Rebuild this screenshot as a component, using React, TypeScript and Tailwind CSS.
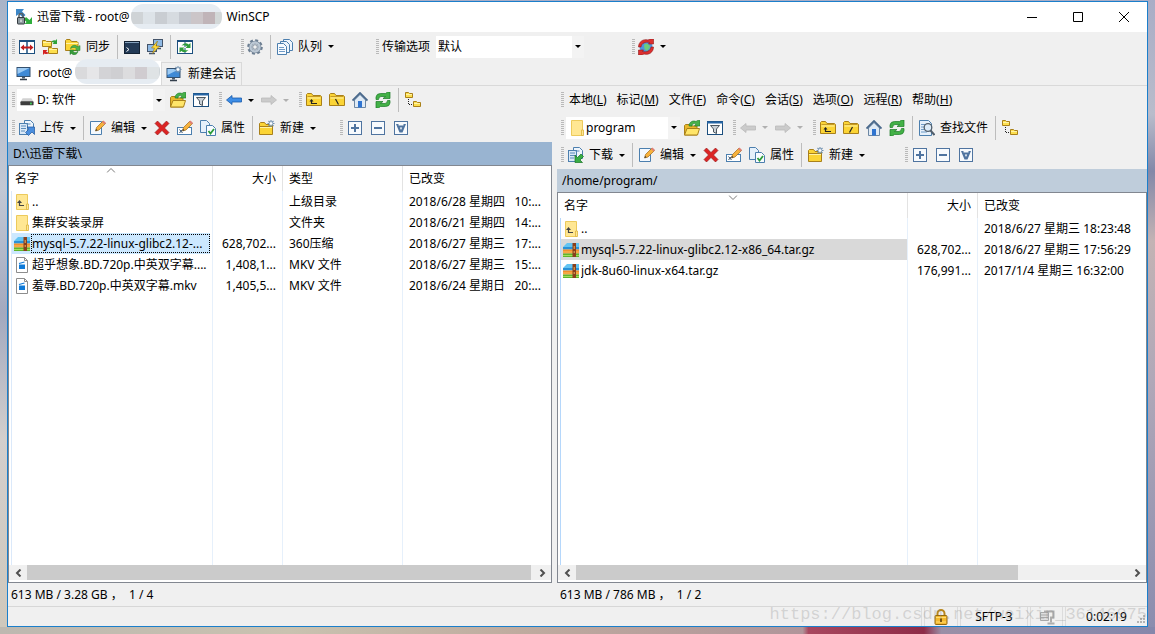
import React from 'react';

const Svg: React.FC<{ children: React.ReactNode; size?: number }> = ({ children, size = 16 }) => (
  <svg viewBox="0 0 16 16" width={size} height={size} className="shrink-0" aria-hidden="true">
    {children}
  </svg>
);

const AppIcon = () => (
  <Svg>
    <path d="M0 0h8L6 2.500 9.500 6 7 8.500 3 5 0 7z" fill="#3d86c6" />
    <path d="M16 15H8.500l2-2L8 10.500l2-2.500 3.500 3L16 8z" fill="#2fae3c" />
    <path d="M3 9V6.500a2 2 0 0 1 4 0V9" fill="none" stroke="#555f66" strokeWidth="1.500" />
    <rect x="1.500" y="8.500" width="7" height="6.500" rx="0.500" fill="#8e999f" stroke="#343b40" />
    <path d="M5 10.500v2.500" stroke="#fff" />
  </Svg>
);

const SplitIcon = () => (
  <Svg>
    <rect x="0.500" y="1.500" width="15" height="13" fill="#fff" stroke="#1c4f7e" />
    <path d="M0 2h16" stroke="#1c4f7e" strokeWidth="2" />
    <path d="M8 1v14" stroke="#1c4f7e" strokeWidth="1.500" />
    <path d="M1.500 8.500L5 5.500v2h6v-2l3.500 3-3.500 3v-2H5v2z" fill="#c01c1c" />
  </Svg>
);

const FolderShape = () => (
  <>
    <path d="M0.500 13.500v-11l1-1h4l1.500 2h7.500l1 1v9z" fill="#fbd435" stroke="#a9801a" />
    <path d="M1.500 6h13" stroke="#fff3a6" />
    <path d="M1.500 4.500h13" stroke="#c79b22" />
  </>
);

const SmallFolder: React.FC<{ x: number; y: number; w?: number; h?: number }> = ({ x, y, w = 7, h = 5 }) => (
  <g transform={`translate(${x} ${y})`}>
    <path d={`M0.500 ${h + 0.5}V0.500h3l1 1H${w + 0.5}v${h - 1}z`} fill="#fddf4e" stroke="#a9801a" />
    <path d={`M1 2.500h${w - 1}`} stroke="#fff3a6" />
  </g>
);

const CompareIcon = () => (
  <Svg>
    <SmallFolder x={0} y={1} w={9} h={6} />
    <SmallFolder x={6} y={8} w={9} h={6} />
    <path d="M9 3q2-2.500 4.500-1.500L15 0v5h-4.500l1.500-1.500Q11 3 9 3z" fill="#2fa13a" />
    <path d="M7 13.500q-2 2.500-4.500 1L1 16v-5h4.500L4 12.500q1 1 3 1z" fill="#d32222" />
  </Svg>
);

const SyncIcon = () => (
  <Svg>
    <path d="M0.500 11.500v-10l1-1h3.500l1.500 2h5.500l1 1v8z" fill="#fbd435" stroke="#a9801a" />
    <path d="M1 4.500h12" stroke="#fff3a6" />
    <path d="M5.500 9.500c1-4 5.500-4 7.500-1.500l2-1.500v5h-5l1.500-1.500C10.500 8 8 8 5.500 9.500z" fill="#4db24a" stroke="#1d7a2a" strokeWidth="0.500" />
    <path d="M5 15.500v-4.500h4.500l-1.500 1.500c1.500 1.300 3.500 1.200 5-0.300-0.500 3.500-4.500 4.500-6.500 2.200z" fill="#3a9d3c" stroke="#1d7a2a" strokeWidth="0.500" />
  </Svg>
);

const ConsoleIcon = () => (
  <Svg>
    <rect x="0.500" y="2.500" width="15" height="12" fill="#233a56" stroke="#142233" />
    <path d="M1 3.500h14" stroke="#86a3bf" />
    <path d="M2.500 8.500l2.500 2-2.500 2" fill="none" stroke="#fff" />
  </Svg>
);

const PuttyIcon = () => (
  <Svg>
    <rect x="6.500" y="0.500" width="9" height="7" fill="#8fb9e4" stroke="#44546a" />
    <path d="M9 9.500h5" stroke="#44546a" strokeWidth="1.500" />
    <rect x="0.500" y="5.500" width="9" height="7" fill="#8fb9e4" stroke="#44546a" />
    <path d="M2 14.500h6" stroke="#44546a" strokeWidth="1.500" />
    <path d="M10.500 2L4.500 9h3l-2 5.500 7-7.500H9z" fill="#ffd93b" stroke="#9a7a10" strokeWidth="0.600" />
  </Svg>
);

const RefreshIcon = () => (
  <Svg>
    <path d="M1 7.500V5q0.500-3.500 4.500-3.500h5L12.500 0H15v6.500H8L10.500 4.500H6Q4 4.500 3.500 7.500z" fill="#43b147" stroke="#1b7a26" strokeWidth="0.700" />
    <path d="M15 8.500v2.500q-0.500 3.500-4.500 3.500h-5L3.500 16H1V9.500h7l-2.500 2H10q2 0 2.500-3z" fill="#43b147" stroke="#1b7a26" strokeWidth="0.700" />
  </Svg>
);

const KeepSyncIcon = () => (
  <Svg>
    <rect x="0.500" y="1.500" width="15" height="13" fill="#fff" stroke="#1c4f7e" />
    <path d="M0 2h16" stroke="#1c4f7e" strokeWidth="2" />
    <path d="M8 3v12" stroke="#1c4f7e" strokeDasharray="2 1" />
    <path d="M4.500 6.500Q8.500 2.500 11.500 5.500L13.500 4v5H8.500L10 7.500Q8 5.500 4.500 6.500z" fill="#2f9d3b" />
    <path d="M11.500 11Q7.500 15 4.500 12L2.500 13.500v-5h5L6 10q2 2 5.500 1z" fill="#2f9d3b" />
  </Svg>
);

const GearIcon = () => (
  <Svg>
    <circle cx="8" cy="8" r="6.600" fill="none" stroke="#6d7f92" strokeWidth="2.400" strokeDasharray="2.900 2.280" />
    <circle cx="8" cy="8" r="4.600" fill="none" stroke="#6d7f92" strokeWidth="3.400" />
    <circle cx="8" cy="8" r="4.500" fill="none" stroke="#bcc8d4" strokeWidth="2.400" />
    <circle cx="8" cy="8" r="2.300" fill="#f1f1f1" stroke="#6d7f92" strokeWidth="0.800" />
  </Svg>
);

const QueueIcon = () => (
  <Svg>
    <path d="M6.500 0.500h6l3 3v8h-9z" fill="#eef5fc" stroke="#4c7fae" />
    <path d="M3.500 2.500h6l3 3v8h-9z" fill="#eef5fc" stroke="#4c7fae" />
    <path d="M0.500 4.500h6l3 3v8h-9z" fill="#f8fbff" stroke="#4c7fae" />
    <path d="M2 8.500h5M2 10.500h6M2 12.500h6" stroke="#6f9bc6" />
  </Svg>
);

const ReconnectIcon = () => (
  <Svg>
    <circle cx="8" cy="8" r="6.500" fill="#4f93dc" />
    <path d="M6 5.500l2.500-1 3 1.500 0.500 2.500-3 3.500-2.500-2z" fill="#6dcb7c" />
    <path d="M0.500 8C0.500 3 5-0.500 10 1L12 0h3.500v5H10.500l1-1.500C7.500 2.500 3.500 4 3 8z" fill="#dd2f2f" stroke="#8d1717" strokeWidth="0.600" />
    <path d="M15.500 8c0 5-4.500 8.500-9.500 7L4 16H0.500v-5h5l-1 1.500c4 1 8-0.500 8.500-4.500z" fill="#dd2f2f" stroke="#8d1717" strokeWidth="0.600" />
  </Svg>
);

const Spark = () => (
  <>
    <path d="M12 0v7M8.500 3.500h7M9.500 1l5 5M14.500 1l-5 5" stroke="#7090b0" strokeWidth="1.100" />
    <circle cx="12" cy="3.500" r="1.800" fill="#fff" stroke="#7090b0" strokeWidth="0.600" />
  </>
);

const MonitorIcon: React.FC<{ spark?: boolean }> = ({ spark }) => (
  <Svg>
    <rect x="1" y="2.500" width="13" height="9" fill="#3f8ad6" stroke="#34506e" />
    <path d="M1.500 3h12L1.500 9z" fill="#9ccaf3" />
    <path d="M6 12h3v1.500H6z" fill="#4b5b6c" />
    <path d="M4 14.500h7" stroke="#333f4c" strokeWidth="1.500" />
    {spark && <Spark />}
  </Svg>
);

const DriveIcon = () => (
  <Svg size={14}>
    <path d="M3 6h10l2.500 4h-15z" fill="#d2d2d2" />
    <rect x="0.500" y="9.500" width="15" height="4.500" rx="1" fill="#3d3d3d" />
    <rect x="11.500" y="11" width="2" height="2" fill="#41d65a" />
  </Svg>
);

const OpenFolderIcon = () => (
  <Svg>
    <path d="M0.500 15V5.500l1-1h4l1 1.500H13V15z" fill="#e9b92b" stroke="#a9801a" />
    <path d="M0.500 15L3 8.500h12.500L13.500 15z" fill="#ffe569" stroke="#a9801a" />
    <path d="M5 6C5 2 9 0 12 1.500L13.500 0.500H16V6h-5.500l1.500-2C9.500 3 8 4 8 6z" fill="#46b04a" stroke="#1b7a26" strokeWidth="0.600" />
  </Svg>
);

const FilterIcon = () => (
  <Svg>
    <rect x="0.500" y="1.500" width="15" height="13" fill="#fff" stroke="#1c4f7e" />
    <path d="M0 2.500h16" stroke="#2565a5" strokeWidth="2" />
    <path d="M3.500 5.500h9L9.500 9v4.500L6.500 12V9z" fill="#c9d0d6" stroke="#4c565f" />
  </Svg>
);

const ArrowIcon: React.FC<{ dir: 'left' | 'right'; off?: boolean }> = ({ dir, off }) => (
  <Svg>
    <path
      d={dir === 'left' ? 'M0.500 8L6 3.500V6h9.500v4H6v2.500z' : 'M15.500 8L10 3.500V6H0.500v4H10v2.500z'}
      fill={off ? '#cbcbcb' : '#3d8de6'}
      stroke={off ? '#bababa' : '#1a5cab'}
      strokeWidth="0.800"
    />
  </Svg>
);

const ParentIcon = () => (
  <Svg>
    <FolderShape />
    <path d="M5.500 8v3.500h5.500" fill="none" stroke="#222" strokeWidth="1.200" />
    <path d="M3.500 9.500L5.500 7l2 2.500z" fill="#222" />
  </Svg>
);

const RootIcon: React.FC<{ slash: 'back' | 'forward' }> = ({ slash }) => (
  <Svg>
    <FolderShape />
    <path d={slash === 'back' ? 'M6.500 7l3 5.500' : 'M9.500 7l-3 5.500'} stroke="#222" strokeWidth="1.200" />
  </Svg>
);

const HomeIcon = () => (
  <Svg>
    <path d="M2.500 8v7.500h11V8L8 2.500z" fill="#dfeaf5" stroke="#6d87a3" />
    <path d="M0.500 8.500L8 1l7.500 7.500" fill="none" stroke="#4a698c" strokeWidth="1.800" />
    <rect x="6" y="9" width="4" height="6.500" fill="#2f74d0" />
  </Svg>
);

const TreeIcon = () => (
  <Svg>
    <SmallFolder x={0} y={0} w={7} h={5} />
    <SmallFolder x={8} y={9} w={7} h={5} />
    <path d="M3.500 7v6M4 12.500h4" stroke="#222" strokeDasharray="1 1" />
  </Svg>
);

const TransferIcon: React.FC<{ dir: 'up' | 'down' }> = ({ dir }) => (
  <Svg>
    <path d="M5.500 0.500h6l3 3v8h-9z" fill="#eef5fc" stroke="#4c7fae" />
    <rect x="0.500" y="3.500" width="8" height="11" fill="#dbe9f7" stroke="#4c7fae" />
    <path d="M2 6h5M2 8.500h5M2 11h4M7.500 4h4" stroke="#5b8cba" />
    {dir === 'up' ? (
      <path d="M8 7h7.500v7.500L13 12l-3.500 3.500-3-3L10 9z" fill="#4a8ede" stroke="#1d559c" strokeWidth="0.700" />
    ) : (
      <path d="M7 15.500V8l2.500 2.500L13 7l2.500 2.500L12 13l2.500 2.500z" fill="#38ad45" stroke="#157424" strokeWidth="0.700" />
    )}
  </Svg>
);

const PencilShape = () => (
  <>
    <path d="M5.500 11L6.500 7.500 13 1l2.500 2.500L9 10z" fill="#f7b23c" stroke="#9c6a1c" strokeWidth="0.700" />
    <path d="M12 2l1.500-1.500 2.500 2.500L14.500 4.500z" fill="#e07f74" />
    <path d="M5.500 11l0.600-2L7.500 10.300z" fill="#333" />
  </>
);

const EditIcon = () => (
  <Svg>
    <path d="M0.500 1.500h11v13h-11z" fill="#f4f9fe" stroke="#4c7fae" />
    <PencilShape />
  </Svg>
);

const DeleteIcon = () => (
  <Svg>
    <path d="M1 3.500L3.500 1 8 5.500 12.500 1 15 3.500 10.500 8 15 12.500 12.500 15 8 10.500 3.500 15 1 12.500 5.500 8z" fill="#dc2424" stroke="#8f1414" strokeWidth="0.600" />
  </Svg>
);

const RenameIcon = () => (
  <Svg>
    <rect x="0.500" y="7.500" width="14" height="7" fill="#fff" stroke="#4c7fae" />
    <path d="M2.500 9.500l3 3.500M5.500 9.500l-3 3.500" stroke="#33506d" />
    <PencilShape />
  </Svg>
);

const PropertiesIcon = () => (
  <Svg>
    <path d="M0.500 0.500h6l3 3v9h-9z" fill="#e5f0fb" stroke="#4c7fae" />
    <path d="M6.500 5.500h6l3 3v7h-9z" fill="#f8fbff" stroke="#4c7fae" />
    <path d="M8.500 11l2 2.500 3.500-4.500" fill="none" stroke="#2a9c38" strokeWidth="1.800" />
  </Svg>
);

const NewFolderIcon = () => (
  <Svg>
    <path d="M0.500 14.500V3.500l1-1h4l1.500 2h6.500v10z" fill="#fbd435" stroke="#a9801a" />
    <path d="M1 6.500h12" stroke="#a9801a" />
    <path d="M1 7.500h12" stroke="#fff3a6" />
    <Spark />
  </Svg>
);

const FindIcon = () => (
  <Svg>
    <path d="M0.500 0.500h9l3 3v12h-12z" fill="#e5f0fb" stroke="#4c7fae" />
    <path d="M2 4.500h4M2 7h3M2 9.500h3M2 12h6" stroke="#6f9bc6" />
    <circle cx="9" cy="7.500" r="3.800" fill="#dcebf8" stroke="#525f6c" strokeWidth="1.300" />
    <path d="M11.500 10.500l4 4.500" stroke="#525f6c" strokeWidth="2" />
  </Svg>
);

const BoxIcon: React.FC<{ kind: 'plus' | 'minus' | 'invert' }> = ({ kind }) => (
  <Svg>
    <rect x="1.500" y="1.500" width="13" height="13" fill="#f7fafd" stroke="#4f74a0" />
    {kind === 'plus' && <path d="M4 8h8M8 4v8" stroke="#4f74a0" strokeWidth="2" />}
    {kind === 'minus' && <path d="M4 8h8" stroke="#4f74a0" strokeWidth="2" />}
    {kind === 'invert' && (
      <path fillRule="evenodd" d="M3 4h2.500v1.500h5V4H13L9.500 12.500h-3zM6.800 7.500h2.400L8 10z" fill="#4f74a0" />
    )}
  </Svg>
);

const FolderIcon: React.FC<{ up?: boolean }> = ({ up }) => (
  <Svg>
    <path d="M2.500 0.500h11v15h-11z" fill="#ffe793" stroke="#ecca5c" />
    <path d="M12.500 10v5.500h2V10z" fill="#ffe793" stroke="#dcb43c" strokeWidth="0.800" />
    {up && (
      <>
        <path d="M5.500 8v3.500h4.500" fill="none" stroke="#444" strokeWidth="1.200" />
        <path d="M3 9l2.500-3L8 9z" fill="#444" />
      </>
    )}
  </Svg>
);

const ArchiveIcon = () => (
  <Svg>
    <path d="M0 5L4 1h12v5H0z" fill="#62c4f3" />
    <path d="M0 5h16v2.500H0z" fill="#2a92d8" />
    <path d="M0 7.500h16v4H0z" fill="#f2902b" />
    <path d="M0 9.500h16v1H0z" fill="#fbbf5e" />
    <path d="M0 11.500h16V15H0z" fill="#5fb52b" />
    <path d="M0 13h16v1H0z" fill="#a3e05c" />
    <path d="M9.500 1h3.500v14H9.500z" fill="#8a3f1c" />
    <path d="M11.200 4v3M11.200 9v2" stroke="#e6b25e" />
  </Svg>
);

const VideoIcon = () => (
  <Svg>
    <path d="M2.500 0.500h8l3 3v12h-11z" fill="#fff" stroke="#8d8d8d" />
    <path d="M10.500 0.500v3h3" fill="none" stroke="#8d8d8d" />
    <path d="M5 7.500h6V12H5z" fill="#0f7ad8" />
    <path d="M5 6.500l5.500-1.500" stroke="#0f7ad8" strokeWidth="1.200" />
  </Svg>
);

const LockIcon = () => (
  <Svg>
    <path d="M4.500 7V4.500a3.500 3.500 0 0 1 7 0V7" fill="none" stroke="#b8861d" strokeWidth="2" />
    <rect x="2" y="6.500" width="12" height="9" rx="1" fill="#f4b92e" stroke="#94690f" />
    <path d="M3 8.500h10M3 13h10" stroke="#ffdc73" />
    <path d="M8 9.500v3.500" stroke="#5a3d05" strokeWidth="1.600" />
  </Svg>
);

// compression indicator: archive drawer held in a clamp
const ClampIcon = () => (
  <Svg>
    <path d="M5 2.500h9.500v6H12v5" fill="none" stroke="#adadad" strokeWidth="2" />
    <path d="M8.500 14.500h7" stroke="#adadad" strokeWidth="2" />
    <path d="M1.500 3.500h8v8h-8z" fill="#dedede" stroke="#a8a8a8" />
    <path d="M1.500 6h8M1.500 8.500h8" stroke="#a8a8a8" />
  </Svg>
);

// pixelated strip hiding the host name
const Mosaic: React.FC<{ tones: string[]; width: number; id: string }> = ({ tones, width, id }) => (
  <svg width={width} height="25" viewBox={`0 0 ${width} 25`} aria-hidden="true">
    <clipPath id={id}>
      <rect width={width} height="25" rx="12" />
    </clipPath>
    <g clipPath={`url(#${id})`}>
      <rect width={width} height="25" fill="#e6ecf2" />
      {tones.map((tone, i) => (
        <rect key={i} x={i * 12} y="8" width="12" height="12" fill={tone} />
      ))}
    </g>
  </svg>
);

const Grip = () => (
  <span className="h-4 w-[3px] shrink-0 bg-[repeating-linear-gradient(to_bottom,#b9b9b9_0_1px,transparent_1px_2px)]" />
);

const Sep = () => <span className="mx-[3px] h-6 w-px shrink-0 bg-[#bdbdbd]" />;

const Caret: React.FC<{ off?: boolean }> = ({ off }) => (
  <svg width="6" height="3" viewBox="0 0 6 3" className="shrink-0" aria-hidden="true">
    <path d="M0 0h6L3 3z" fill={off ? '#b0b0b0' : '#000'} />
  </svg>
);

interface ToolProps {
  icon: React.ReactNode;
  label?: string;
  title?: string;
  menu?: boolean;
  off?: boolean;
}

const Tool: React.FC<ToolProps> = ({ icon, label, title, menu, off }) => (
  <button
    type="button"
    aria-label={label ?? title}
    className="flex h-6 shrink-0 items-center pl-[3px] pr-1 hover:bg-[#e0e8f0]"
  >
    {icon}
    {label && <span className="ml-[5px]">{label}</span>}
    {menu && (
      <span className="ml-1.5">
        <Caret off={off} />
      </span>
    )}
  </button>
);

interface ComboProps {
  label: string;
  value: string;
  className: string;
  selectClass: string;
  icon?: React.ReactNode;
}

const Combo: React.FC<ComboProps> = ({ label, value, className, selectClass, icon }) => (
  <span className={`relative flex h-[22px] shrink-0 items-center bg-white ${className}`}>
    {icon && <span className="pointer-events-none absolute left-[3px]">{icon}</span>}
    <select aria-label={label} className={`h-full w-full appearance-none outline-none ${selectClass}`}>
      <option>{value}</option>
    </select>
    <span className="pointer-events-none absolute right-0 flex h-full w-3 items-center justify-center bg-[#f3f3f3]">
      <Caret />
    </span>
  </span>
);

interface FileRow {
  name: string;
  kind: 'up' | 'folder' | 'archive' | 'video';
  size?: string;
  type?: string;
  changed: string;
  selected?: boolean;
}

const localFiles: FileRow[] = [
  { name: '..', kind: 'up', type: '上级目录', changed: '2018/6/28 星期四   10:...' },
  { name: '集群安装录屏', kind: 'folder', type: '文件夹', changed: '2018/6/21 星期四   14:...' },
  { name: 'mysql-5.7.22-linux-glibc2.12-...', kind: 'archive', size: '628,702...', type: '360压缩', changed: '2018/6/27 星期三   17:...', selected: true },
  { name: '超乎想象.BD.720p.中英双字幕....', kind: 'video', size: '1,408,1...', type: 'MKV 文件', changed: '2018/6/27 星期三   15:...' },
  { name: '羞辱.BD.720p.中英双字幕.mkv', kind: 'video', size: '1,405,5...', type: 'MKV 文件', changed: '2018/6/24 星期日   20:...' },
];

const remoteFiles: FileRow[] = [
  { name: '..', kind: 'up', changed: '2018/6/27 星期三 18:23:48' },
  { name: 'mysql-5.7.22-linux-glibc2.12-x86_64.tar.gz', kind: 'archive', size: '628,702...', changed: '2018/6/27 星期三 17:56:29', selected: true },
  { name: 'jdk-8u60-linux-x64.tar.gz', kind: 'archive', size: '176,991...', changed: '2017/1/4 星期三 16:32:00' },
];

const kindIcon = {
  up: <FolderIcon up />,
  folder: <FolderIcon />,
  archive: <ArchiveIcon />,
  video: <VideoIcon />,
};

interface FileListProps {
  files: FileRow[];
  local?: boolean;
}

const FileList: React.FC<FileListProps> = ({ files, local }) => {
  const head = 'border-r border-[#e3e3e3] font-normal';
  const line = 'border-r border-[#e6f0fb]';

  return (
    <table className="h-full w-full table-fixed border-separate border-spacing-0 whitespace-pre">
      <colgroup>
        <col className={local ? 'w-[204px]' : ''} />
        <col className="w-[70px]" />
        {local && <col className="w-[120px]" />}
        <col className={local ? '' : 'w-[168px]'} />
      </colgroup>
      <thead>
        <tr className="h-[25px]">
          <th className={`relative pl-1.5 text-left ${head}`}>
            名字
            <svg
              width="9"
              height="5"
              viewBox="0 0 9 5"
              className="absolute left-1/2 top-0.5 -translate-x-1/2"
              aria-hidden="true"
            >
              <path d={local ? 'M0.500 4.500l4-4 4 4' : 'M0.500 0.500l4 4 4-4'} fill="none" stroke="#7a7a7a" />
            </svg>
          </th>
          <th className={`pr-1.5 text-right ${head}`}>大小</th>
          {local && <th className={`pl-1.5 text-left ${head}`}>类型</th>}
          <th className="pl-1.5 text-left font-normal">已改变</th>
        </tr>
      </thead>
      <tbody>
        {files.map((file) => (
          <tr key={file.name} className="h-[21px]">
            <td className={`pl-0.5 ${line}`}>
              <div
                className={`flex h-[21px] items-center border-l pl-0.5 ${local ? 'mr-0.5 border-[#dbe9fa]' : 'border-[#b5d7fb]'} ${
                  file.selected ? (local ? 'bg-[#cce8ff]' : 'bg-[#d9d9d9]') : ''
                }`}
              >
                {kindIcon[file.kind]}
                <span
                  className={`ml-px flex h-[19px] flex-1 items-center overflow-hidden border border-dotted ${
                    file.selected && local ? 'border-black' : 'border-transparent'
                  }`}
                >
                  {file.name}
                </span>
              </div>
            </td>
            <td className={`pr-1.5 text-right ${line}`}>{file.size}</td>
            {local && <td className={`pl-1.5 ${line}`}>{file.type}</td>}
            <td className="overflow-hidden pl-1.5">{file.changed}</td>
          </tr>
        ))}
        <tr aria-hidden="true">
          <td className={`pl-0.5 ${line}`}>
            <div className={`h-full border-l ${local ? 'border-[#dbe9fa]' : 'border-[#b5d7fb]'}`} />
          </td>
          <td className={line} />
          {local && <td className={line} />}
          <td />
        </tr>
      </tbody>
    </table>
  );
};

const ScrollButton: React.FC<{ dir: 'left' | 'right' }> = ({ dir }) => (
  <button type="button" aria-label={`Scroll ${dir}`} className="flex w-[18px] shrink-0 items-center justify-center">
    <svg width="7" height="8" viewBox="0 0 7 8" aria-hidden="true">
      <path d={dir === 'left' ? 'M5.500 0.500L2 4l3.500 3.500' : 'M1.500 0.500L5 4 1.500 7.500'} fill="none" stroke="#505050" strokeWidth="2" />
    </svg>
  </button>
);

const ScrollBar: React.FC<{ thumb: string }> = ({ thumb }) => (
  <div className="mb-0.5 flex h-[15px] shrink-0 bg-[#f0f0f0]">
    <ScrollButton dir="left" />
    <div className="flex-1">
      <div className={`h-full bg-[#cbcbcb] ${thumb}`} />
    </div>
    <ScrollButton dir="right" />
  </div>
);

interface PaneProps extends FileListProps {
  path: string;
  summary: string;
  thumb: string;
  className: string;
  children: React.ReactNode;
}

const Pane: React.FC<PaneProps> = ({ path, summary, thumb, className, children, files, local }) => (
  <section className={`flex flex-col ${className}`}>
    {children}
    <div className={`flex h-[23px] shrink-0 items-center pl-[5px] ${local ? 'bg-[#99b4d1]' : 'bg-[#bfcddb]'}`}>
      {path}
    </div>
    <div className="flex min-h-0 flex-1 flex-col border border-[#828790] bg-white">
      <div className="min-h-0 flex-1">
        <FileList files={files} local={local} />
      </div>
      <ScrollBar thumb={thumb} />
    </div>
    <p className="flex h-[23px] shrink-0 items-center whitespace-pre pl-[3px]">{summary}</p>
  </section>
);

const FileTools: React.FC<{ local?: boolean }> = ({ local }) => (
  <div className="flex h-7 shrink-0 items-center pl-1">
    <Grip />
    <span className="w-px" />
    <Tool icon={<TransferIcon dir={local ? 'up' : 'down'} />} label={local ? '上传' : '下载'} menu />
    <Sep />
    <Tool icon={<EditIcon />} label="编辑" menu />
    <Tool icon={<DeleteIcon />} title="删除" />
    <Tool icon={<RenameIcon />} title="重命名" />
    <Tool icon={<PropertiesIcon />} label="属性" />
    <Sep />
    <Tool icon={<NewFolderIcon />} label="新建" menu />
    <span className={local ? 'w-5' : 'w-9'} />
    <Grip />
    <span className="w-px" />
    <Tool icon={<BoxIcon kind="plus" />} title="选择" />
    <Tool icon={<BoxIcon kind="minus" />} title="取消选择" />
    <Tool icon={<BoxIcon kind="invert" />} title="反选" />
  </div>
);

const NavTools: React.FC<{ local?: boolean }> = ({ local }) => (
  <div className={`flex shrink-0 items-center pl-1 ${local ? 'h-7' : 'h-[27px]'}`}>
    <Grip />
    {local ? (
      <Combo label="驱动器" value="D: 软件" icon={<DriveIcon />} className="mx-0.5 w-[148px]" selectClass="pl-5" />
    ) : (
      <Combo label="目录" value="program" icon={<FolderIcon />} className="ml-0.5 mr-px w-[114px]" selectClass="pl-5" />
    )}
    <Tool icon={<OpenFolderIcon />} title="打开目录" />
    <Tool icon={<FilterIcon />} title="过滤" />
    <span className="w-1.5" />
    <Grip />
    <span className="w-px" />
    <Tool icon={<ArrowIcon dir="left" off={!local} />} title="后退" menu off={!local} />
    <Tool icon={<ArrowIcon dir="right" off />} title="前进" menu off />
    <span className="w-1.5" />
    <Grip />
    <span className="w-px" />
    <Tool icon={<ParentIcon />} title="上级目录" />
    <Tool icon={<RootIcon slash={local ? 'back' : 'forward'} />} title="根目录" />
    <Tool icon={<HomeIcon />} title="主目录" />
    <Tool icon={<RefreshIcon />} title="刷新" />
    <Sep />
    {!local && (
      <>
        <Tool icon={<FindIcon />} label="查找文件" />
        <Sep />
      </>
    )}
    <Tool icon={<TreeIcon />} title="目录树" />
  </div>
);

const menus = [
  ['本地', 'L'],
  ['标记', 'M'],
  ['文件', 'F'],
  ['命令', 'C'],
  ['会话', 'S'],
  ['选项', 'O'],
  ['远程', 'R'],
  ['帮助', 'H'],
];

const MenuBar = () => (
  <nav className="flex h-7 shrink-0 items-center pl-1">
    <Grip />
    <div className="flex gap-2.5 pl-[5px]">
      {menus.map(([name, key]) => (
        <button key={key} type="button" className="shrink-0">
          {name}(<u>{key}</u>)
        </button>
      ))}
    </div>
  </nav>
);

const TitleBar = () => (
  <header className="relative flex h-[30px] shrink-0 items-center bg-white pl-2">
    <AppIcon />
    <h1 className="ml-[5px] flex flex-1 items-center whitespace-pre">
      迅雷下载 - root@
      <span className="w-[91px]" />
      <span className="ml-1.5">WinSCP</span>
    </h1>
    <span className="absolute left-[123px] top-0.5">
      <Mosaic id="title-host" width={91} tones={['#cfd3d6', '#dde3e8', '#c9cdd2', '#d6dbe0', '#c4c8cf', '#cbc5c8', '#c0b4b8', '#d3d8d8']} />
    </span>
    <button type="button" aria-label="Minimize" className="flex h-full w-[46px] items-center justify-center">
      <svg width="10" height="10" viewBox="0 0 10 10">
        <path d="M0 5.500h10" stroke="#000" />
      </svg>
    </button>
    <button type="button" aria-label="Maximize" className="flex h-full w-[46px] items-center justify-center">
      <svg width="10" height="10" viewBox="0 0 10 10">
        <path d="M0.500 0.500h9v9h-9z" fill="none" stroke="#000" />
      </svg>
    </button>
    <button type="button" aria-label="Close" className="flex h-full w-[46px] items-center justify-center">
      <svg width="10" height="10" viewBox="0 0 10 10">
        <path d="M0 0l10 10M10 0L0 10" stroke="#000" />
      </svg>
    </button>
  </header>
);

const MainToolbar = () => (
  <div className="flex h-[29px] shrink-0 items-center pl-1">
    <Grip />
    <span className="w-px" />
    <Tool icon={<SplitIcon />} title="比较" />
    <Tool icon={<CompareIcon />} title="比较目录" />
    <Tool icon={<SyncIcon />} label="同步" />
    <Sep />
    <Tool icon={<ConsoleIcon />} title="控制台" />
    <Tool icon={<PuttyIcon />} title="PuTTY" />
    <Sep />
    <Tool icon={<KeepSyncIcon />} title="保持同步" />
    <span className="w-11" />
    <Grip />
    <Tool icon={<GearIcon />} title="选项" />
    <Sep />
    <Tool icon={<QueueIcon />} label="队列" menu />
    <span className="w-[38px]" />
    <Grip />
    <label className="ml-[3px] flex items-center">
      传输选项
      <Combo label="传输选项" value="默认" className="ml-1.5 w-[148px]" selectClass="pl-0.5" />
    </label>
    <span className="w-12" />
    <Grip />
    <Tool icon={<ReconnectIcon />} title="重新连接" menu />
  </div>
);

const SessionTabs = () => (
  <div role="tablist" className="flex h-[25px] shrink-0 items-end border-b border-[#d9d9d9]">
    <button type="button" role="tab" aria-selected="true" className="relative flex h-full w-[153px] items-center bg-white pl-2">
      <MonitorIcon />
      <span className="ml-1.5">root@</span>
      <span className="absolute -top-0.5 left-[67px]">
        <Mosaic id="tab-host" width={85} tones={['#dadadc', '#e6e6e8', '#d3d3d6', '#cfcfd2', '#dcdcde', '#d0ccd0', '#dfe3e5', '#cfd5d8']} />
      </span>
    </button>
    <button type="button" role="tab" aria-selected="false" className="flex h-[23px] w-[81px] items-center border border-b-0 border-[#d9d9d9] pl-1">
      <MonitorIcon spark />
      <span className="ml-1.5">新建会话</span>
    </button>
  </div>
);

const StatusBar = () => (
  <footer className="relative flex h-5 shrink-0 items-stretch gap-0.5 border-t border-[#d7d7d7]">
    <div className="flex-1 border-r border-[#dcdcdc]" />
    <div className="flex w-[34px] items-center justify-center border-x border-[#dcdcdc]">
      <LockIcon />
    </div>
    <div className="flex w-[68px] items-center justify-center border-x border-[#dcdcdc]">SFTP-3</div>
    <div className="flex w-[33px] items-center justify-center border-x border-[#dcdcdc]">
      <ClampIcon />
    </div>
    <div className="flex w-[82px] items-center justify-center border-l border-[#dcdcdc]">0:02:19</div>
    <svg width="9" height="9" viewBox="0 0 9 9" className="absolute bottom-0.5 right-0.5" aria-hidden="true">
      <path d="M7 1h2M4 4h2M7 4h2M1 7h2M4 7h2M7 7h2" stroke="#b4b4b4" strokeWidth="2" />
    </svg>
    <span className="pointer-events-none absolute -top-0.5 right-0 font-['Liberation_Mono'] text-[17px] leading-5 text-[#8c8c8c]/30">
      https://blog.csdn.net/weixin_36146975
    </span>
  </footer>
);

const App: React.FC = () => (
  <div className="flex h-screen flex-col overflow-hidden bg-[linear-gradient(to_bottom,#a9adc6,#b9bccb_18%,#8388a8_27%,#c3b3b4_38%,#b0a8b8_60%,#8a8cae)] font-['Noto_Sans','Noto_Sans_CJK_SC',sans-serif] text-[12px] leading-4 text-black">
    <div className="flex min-h-0 flex-1 bg-[linear-gradient(to_bottom,#a9b4c8,#c2c8d4_30%,#a3a9bf_50%,#d3cfcd_70%,#cfc8bc)] bg-[length:7px_100%] bg-no-repeat px-[7px] pt-px">
      <main className="flex min-w-0 flex-1 flex-col border border-[#1b7fcb] bg-[#f0f0f0]">
        <TitleBar />
        <MainToolbar />
        <SessionTabs />
        <div className="flex min-h-0 flex-1">
          <Pane
            local
            path="D:\迅雷下载\"
            files={localFiles}
            summary="613 MB / 3.28 GB ，  1 / 4"
            thumb="mr-0.5"
            className="w-[544px] shrink-0"
          >
            <NavTools local />
            <FileTools local />
          </Pane>
          <div className="w-[5px] shrink-0" />
          <Pane
            path="/home/program/"
            files={remoteFiles}
            summary="613 MB / 786 MB ，  1 / 2"
            thumb="w-4/5"
            className="min-w-0 flex-1"
          >
            <MenuBar />
            <NavTools />
            <FileTools />
          </Pane>
        </div>
        <StatusBar />
      </main>
    </div>
    <div className="h-[7px] shrink-0 bg-[linear-gradient(to_right,#bdb8b0,#c9c2b0_25%,#bfab9f_45%,#b0959a_69.5%,#a8475f_70%,#8e2c48_80%,#9a8fa6_81.5%,#8587ab)]" />
  </div>
);

export default App;
